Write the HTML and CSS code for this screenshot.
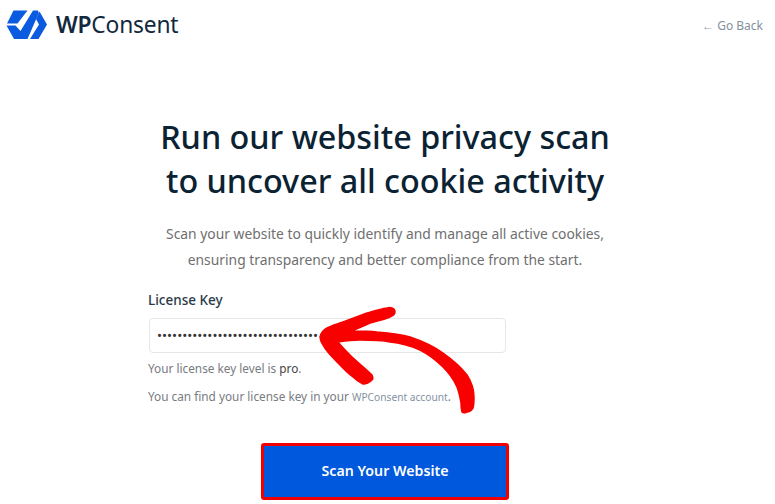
FILE: index.html
```html
<!DOCTYPE html>
<html lang="en">
<head>
<meta charset="utf-8">
<title>WPConsent</title>
<link rel="stylesheet" href="styles.css">
</head>
<body>
<header class="top">
  <div class="brand">
    <svg class="logo" viewBox="6 10 42 30" width="42" height="30" aria-hidden="true">
      <path fill="#0a5be0" d="M13.500 10.500H27.500L17.500 23.500H7Z"/>
      <path fill="#0a5be0" d="M6.500 25.500H15.500L20.500 31 33 10.500H38L38.800 13 27.500 39H14Z"/>
      <path fill="#0a5be0" d="M39.500 11.500L47 24.500 38.500 39H30L39 24.500 36 19Z"/>
    </svg>
    <span class="word"><b>WP</b>Consent</span>
  </div>
  <a class="back"><span class="arrow-glyph">←</span> Go Back</a>
</header>
<main class="main">
  <h1>Run our website privacy scan<br>to uncover all cookie activity</h1>
  <p class="lead">Scan your website to quickly identify and manage all active cookies,<br>ensuring transparency and better compliance from the start.</p>
  <form class="form">
    <label class="label" for="key">License Key</label>
    <div class="input" id="key">••••••••••••••••••••••••••••••••</div>
    <p class="hint">Your license key level is <strong>pro</strong>.</p>
    <p class="hint second">You can find your license key in your <a class="link">WPConsent account</a>.</p>
  </form>
  <div class="cta"><button class="scan" type="button">Scan Your Website</button></div>
</main>
<svg class="annot" viewBox="0 0 775 504" width="775" height="504" aria-hidden="true">
  <path fill="#f80000" stroke="#f80000" stroke-width="1.500" stroke-linejoin="round" d="M387 308C391 307 395 308 395 312C395 315 392 316 390 317C383 320 376 321 370 323C364 326 358 328 352 331C360 331 369 331 377 332C389 333 400 334 410 337C422 341 433 346 443 353C453 360 461 367 467 375C472 383 474 390 474 397C474 401 474 405 473 408C471 411 469 412 467 412C465 413 463 413 462 412C461 409 461 406 461 403C460 397 459 392 457 387C454 380 449 373 443 367C436 360 428 354 420 350C411 346 401 343 390 342C380 340 370 340 360 340C352 340 345 341 338 342C342 347 346 351 350 355C357 362 365 368 372 375C373 377 373 379 372 380C369 383 366 384 363 384C359 382 356 380 353 377C347 373 342 367 337 362C332 357 326 351 323 345C321 342 320 340 320 337C321 333 323 330 327 328C332 325 338 324 343 322C351 319 359 316 367 313C374 311 380 309 387 308Z"/>
</svg>
</body>
</html>
```
FILE: styles.css
```css
* { box-sizing: border-box; }
html, body { margin: 0; padding: 0; }
body {
  width: 775px;
  height: 504px;
  overflow: hidden;
  background: #fff;
  position: relative;
  font-family: "Noto Sans", "Open Sans", sans-serif;
  color: #0f2a3f;
}
.top {
  display: flex;
  justify-content: space-between;
  align-items: center;
  height: 50px;
  padding: 0 12px 0 6px;
}
.brand { display: flex; align-items: center; gap: 8px; }
.logo { display: block; }
.word { font-size: 22.800px; line-height: 28px; color: #12283c; letter-spacing: -0.2px; }
.word b { font-weight: 600; }
.back { font-size: 12px; color: #84919e; padding-top: 1px; }
.arrow-glyph { color: #9aa5b0; }
.main { display: flex; flex-direction: column; align-items: center; padding: 64px 5px 0 0; }
h1 {
  margin: 0;
  font-size: 32.350px;
  line-height: 44px;
  font-weight: 500;
  text-align: center;
  color: #0b2233;
}
.lead {
  margin: 19px 0 0;
  font-size: 13.870px;
  line-height: 26px;
  text-align: center;
  color: #6f6f6f;
}
.form { width: 357px; align-self: flex-start; margin: 17px 0 0 149px; }
.label { display: block; font-size: 13.500px; line-height: 20px; font-weight: 500; color: #2a3a48; margin-left: -1px; }
.input {
  height: 35px;
  margin-top: 8px;
  padding: 0 7px;
  border: 1px solid #e6e6e6;
  border-radius: 4px;
  background: #fff;
  font-size: 13.400px;
  line-height: 33px;
  color: #333;
  white-space: nowrap;
  overflow: hidden;
}
.hint { margin: 7px 0 0 -1px; font-size: 11.800px; line-height: 17px; color: #777b7f; }
.hint.second { margin-top: 11px; }
.hint strong { font-weight: 400; color: #444; }
.link { color: #84929f; font-size: 10.200px; }
.cta { margin-top: 37px; }
.scan {
  width: 248px;
  height: 57px;
  background: #0058dd;
  border: 3px solid #f00000;
  border-radius: 3px;
  color: #fff;
  font-family: inherit;
  font-size: 14.200px;
  font-weight: 600;
  padding: 0 0 2px;
}
.annot { position: absolute; left: 0; top: 0; pointer-events: none; }
```
